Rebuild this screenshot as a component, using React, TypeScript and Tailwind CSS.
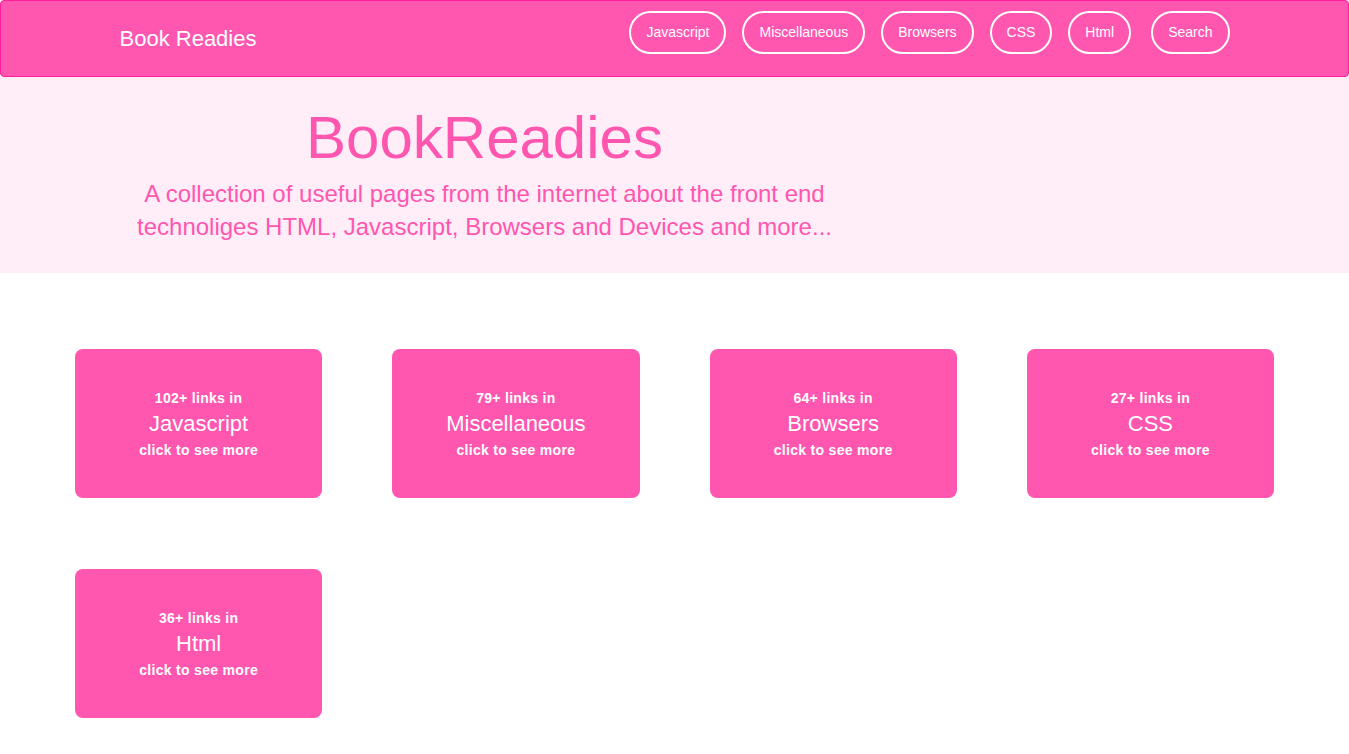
import React from 'react';

const topics = [
  { name: 'Javascript', count: 102 },
  { name: 'Miscellaneous', count: 79 },
  { name: 'Browsers', count: 64 },
  { name: 'CSS', count: 27 },
  { name: 'Html', count: 36 },
];

export default function App() {
  return (
    <div className="min-h-screen bg-white font-['Liberation_Sans',Arial,sans-serif]">
      {/* top bar */}
      <nav className="h-[77px] rounded-[4px] border border-[#ff1f9f] bg-[#ff56b0]">
        <div className="mx-auto flex h-full w-[1140px] items-start px-[15px]">
          <a className="mt-[24px] text-[22px] leading-[28px] text-white">Book Readies</a>
          <div className="ml-auto mt-[10px] flex items-center">
            {topics.map((t) => (
              <a
                key={t.name}
                className="mr-[16px] flex h-[43px] items-center rounded-[22px] border-2 border-white px-[15px] text-[14px] text-white"
              >
                {t.name}
              </a>
            ))}
            <a className="ml-[4px] flex h-[43px] items-center rounded-[22px] border-2 border-white px-[15px] text-[14px] text-white">
              Search
            </a>
          </div>
        </div>
      </nav>

      {/* hero */}
      <header className="h-[196px] bg-[#ffedf8]">
        <div className="mx-auto w-[1140px] px-[15px]">
          <div className="w-[730px] pt-[24px] text-center text-[#ff56b0]">
            <h1 className="text-[60px] leading-[74px]">BookReadies</h1>
            <p className="mt-[2px] text-[24px] leading-[33px]">
              A collection of useful pages from the internet about the front end technoliges HTML, Javascript,
              Browsers and Devices and more...
            </p>
          </div>
        </div>
      </header>

      {/* topic cards */}
      <main className="grid grid-cols-4 gap-x-[70px] gap-y-[71px] px-[75px] pt-[76px] pb-[36px]">
        {topics.map((t) => (
          <a
            key={t.name}
            className="flex h-[149px] flex-col items-center justify-center rounded-[8px] bg-[#ff56b0] text-center text-white"
          >
            <span className="text-[14px] font-bold leading-[22px] tracking-[0.3px]">{t.count}+ links in</span>
            <span className="text-[22px] leading-[30px]">{t.name}</span>
            <span className="text-[14px] font-bold leading-[22px] tracking-[0.3px]">click to see more</span>
          </a>
        ))}
      </main>
    </div>
  );
}
